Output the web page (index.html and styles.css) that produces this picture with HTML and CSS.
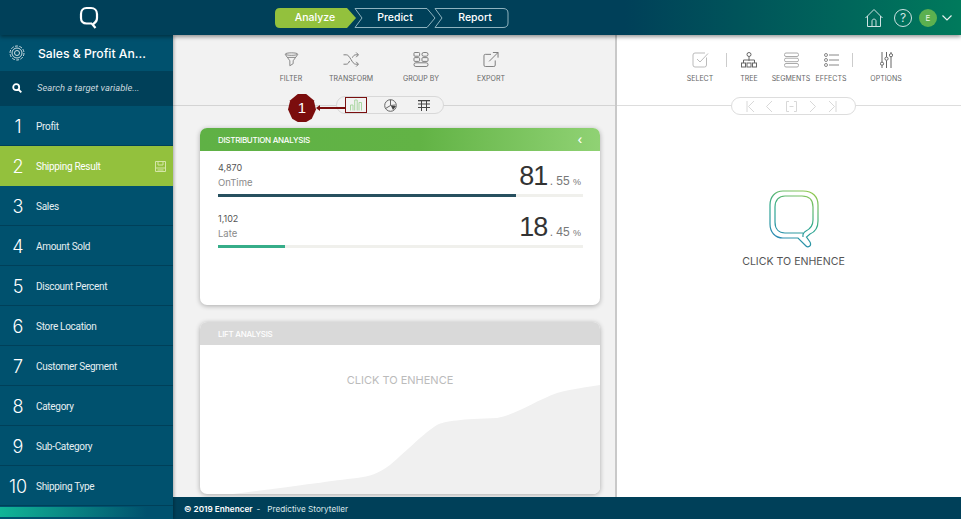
FILE: index.html
```html
<!DOCTYPE html>
<html>

<head>
    <title>Enhencer</title>
    <meta charset="utf-8">
    <link rel="stylesheet" href="styles.css">
</head>

<body>
    <header class="topbar">
        <div class="logo">
            <svg width="20" height="24" viewBox="0 0 20 24" fill="none" stroke="#fff" stroke-width="2.2">
                <path d="M13 17.5H7.5C4 17.5 2 15.2 2 12V8C2 4.500 4.200 2 7.500 2H12C15.500 2 18 4.500 18 8V12C18 14.500 17 16 15.500 17L13.500 18.500L16.500 22"/>
            </svg>
        </div>
        <nav class="steps">
            <svg class="steps-bg" width="236" height="22" viewBox="0 0 236 22" fill="none" stroke="#8fb3bf" stroke-width="1">
                <path d="M80 1.500H152L160 11L152 20.500H80L87 11Z"/>
                <path d="M160 1.500H228Q233 1.500 233 6V16Q233 20.500 228 20.500H160L167 11Z"/>
                <path d="M5 1H72L81 11L72 21H5Q0 21 0 16V6Q0 1 5 1Z" fill="#93c13d" stroke="none"/>
            </svg>
            <span class="step">Analyze</span>
            <span class="step">Predict</span>
            <span class="step">Report</span>
        </nav>
        <div class="top-right">
            <svg class="home" width="18" height="20" viewBox="0 0 18 20" fill="none" stroke="#cfe3e3" stroke-width="1">
                <path d="M.5 10L9 1.500L17.500 10M2.500 8V18.500H15.500V8M7 18.500V13C7 10.500 11 10.500 11 13V18.500"/>
            </svg>
            <span class="help">?</span>
            <span class="avatar">E</span>
            <svg width="10" height="6" viewBox="0 0 10 6" fill="none" stroke="#e6f0ee" stroke-width="1.200">
                <path d="M.5 .5L5 5L9.500 .5"/>
            </svg>
        </div>
    </header>

    <div class="layout">
        <aside class="sidebar">
            <div class="project">
                <svg width="16" height="16" viewBox="0 0 16 16" fill="none" stroke="#cfdfe4" stroke-width="1">
                    <circle cx="8" cy="8" r="2.500"/>
                    <circle cx="8" cy="8" r="5"/>
                    <circle cx="8" cy="8" r="7" stroke-dasharray="3 1.400"/>
                </svg>
                <span>Sales &amp; Profit An...</span>
            </div>
            <div class="search">
                <svg width="10" height="10" viewBox="0 0 10 10" fill="none" stroke="#fff" stroke-width="1.800">
                    <circle cx="4.200" cy="4.200" r="3"/>
                    <path d="M6.500 6.500L9.300 9.300"/>
                </svg>
                <span>Search a target variable...</span>
            </div>
            <ul class="vars">
                <li><b>1</b>Profit</li>
                <li class="active"><b>2</b>Shipping Result
                    <svg class="save" width="11" height="11" viewBox="0 0 11 11" fill="none" stroke="#d5e6a8" stroke-width="1">
                        <path d="M.5 .5H10.500V10.500H.5ZM3 .5V4H8V.5M.5 7H10.500M2.500 9H8.500"/>
                    </svg>
                </li>
                <li><b>3</b>Sales</li>
                <li><b>4</b>Amount Sold</li>
                <li><b>5</b>Discount Percent</li>
                <li><b>6</b>Store Location</li>
                <li><b>7</b>Customer Segment</li>
                <li><b>8</b>Category</li>
                <li><b>9</b>Sub-Category</li>
                <li><b>10</b>Shipping Type</li>
            </ul>
            <div class="side-strip"></div>
        </aside>

        <div class="content">
            <div class="panels">
                <section class="panel-left">
                    <div class="tools">
                        <div class="tool">
                            <svg width="17" height="15" viewBox="0 0 17 18" fill="none" stroke="#777" stroke-width="1">
                                <ellipse cx="8.500" cy="2.500" rx="7.500" ry="1.500"/>
                                <path d="M1 3L6.500 10.500V16.500L10.500 14V10.500L16 3M4 6.500H13"/>
                            </svg>
                            <span>FILTER</span>
                        </div>
                        <div class="tool">
                            <svg width="16" height="15" viewBox="0 0 16 16" fill="none" stroke="#777" stroke-width="1">
                                <path d="M0 3H3C7 3 9 13 13 13H15.500M0 13H3C5 13 5.800 11 6.500 9.500M9.500 6C10.500 4 11.500 3 13 3H15.500M13.500 .5L16 3L13.500 5.500M13.500 10.500L16 13L13.500 15.500"/>
                            </svg>
                            <span>TRANSFORM</span>
                        </div>
                        <div class="tool">
                            <svg width="16" height="15" viewBox="0 0 16 16" fill="none" stroke="#777" stroke-width="1">
                                <rect x=".5" y=".5" width="6" height="4" rx="1"/>
                                <rect x="9" y=".5" width="6.500" height="4" rx="2"/>
                                <rect x=".5" y="6" width="6" height="4" rx="1"/>
                                <rect x="9" y="6" width="6.500" height="4" rx="1"/>
                                <rect x=".5" y="11.500" width="15" height="4" rx="2"/>
                            </svg>
                            <span>GROUP BY</span>
                        </div>
                        <div class="tool">
                            <svg width="16" height="15" viewBox="0 0 16 16" fill="none" stroke="#777" stroke-width="1">
                                <path d="M8 2.500H2Q.5 2.500 .5 4V14Q.5 15.500 2 15.500H11Q12.500 15.500 12.500 14V9M6 10L15.500 .5M10 .5H15.500V6"/>
                            </svg>
                            <span>EXPORT</span>
                        </div>
                    </div>

                    <div class="view-row">
                        <div class="view-switch">
                            <span class="view-btn selected">
                                <svg width="12" height="12" viewBox="0 0 12 12" fill="none" stroke="#a9d6a0" stroke-width="1">
                                    <path d="M.5 11.500V6H3V11.500M4.700 11.500V1H7.200V11.500M9 11.500V3.500H11.500V11.500"/>
                                </svg>
                            </span>
                            <span class="view-btn">
                                <svg width="13" height="13" viewBox="0 0 13 13" fill="none" stroke="#666" stroke-width="1">
                                    <circle cx="6.500" cy="6.500" r="5.800"/>
                                    <path d="M6.500 .7V6.500L1.500 9.500M6.500 6.500L11.500 6"/>
                                    <path d="M7 7L12 7L9 11Z" fill="#444" stroke="none"/>
                                </svg>
                            </span>
                            <span class="view-btn">
                                <svg width="12" height="11" viewBox="0 0 12 11" fill="none" stroke="#444" stroke-width="1">
                                    <path d="M0 .5H12" stroke-width="1.600"/>
                                    <path d="M0 4H12M0 7.500H12M3.500 0V11M8.500 0V11"/>
                                </svg>
                            </span>
                        </div>
                    </div>

                    <div class="callout">
                        <span class="badge">1</span>
                        <span class="callout-arrow"></span>
                    </div>

                    <div class="cards">
                        <article class="card">
                            <h2 class="card-head green">DISTRIBUTION ANALYSIS <i class="chev">‹</i></h2>
                            <div class="stat">
                                <div class="stat-top">
                                    <div class="stat-name">
                                        <div class="count">4,870</div>
                                        <div class="label">OnTime</div>
                                    </div>
                                    <div class="pct"><strong>81</strong> . 55 <small>%</small></div>
                                </div>
                                <div class="track"><div class="fill dark" style="width: 81.55%"></div></div>
                            </div>
                            <div class="stat">
                                <div class="stat-top">
                                    <div class="stat-name">
                                        <div class="count">1,102</div>
                                        <div class="label">Late</div>
                                    </div>
                                    <div class="pct"><strong>18</strong> . 45 <small>%</small></div>
                                </div>
                                <div class="track"><div class="fill teal" style="width: 18.45%"></div></div>
                            </div>
                        </article>

                        <article class="card lift">
                            <h2 class="card-head grey">LIFT ANALYSIS</h2>
                            <div class="lift-text">CLICK TO ENHENCE</div>
                            <svg class="lift-wave" width="400" height="110" viewBox="0 0 400 110" preserveAspectRatio="none">
                                <path d="M33 110C90 103 130 97 157 94C170 92 178 90 190 81C200 73 225 48 237 41C245 37 262 35 297 34C315 31 335 17 357 9C372 5 388 3 400 1V110Z" fill="#f0f0f0"/>
                            </svg>
                        </article>
                    </div>
                </section>

                <section class="panel-right">
                    <div class="tools-right">
                        <div class="tool tool-select">
                            <svg width="17" height="16" viewBox="0 0 17 16" fill="none" stroke="#bbb" stroke-width="1">
                                <path d="M14.500 5.500V13Q14.500 15 12.500 15H3Q1 15 1 13V3Q1 1 3 1H13M5 7L8 10L16 1.500"/>
                            </svg>
                            <span>SELECT</span>
                        </div>
                        <i class="sep sep-first"></i>
                        <div class="tool tool-tree">
                            <svg width="16" height="16" viewBox="0 0 16 16" fill="none" stroke="#666" stroke-width="1">
                                <circle cx="8" cy="2.500" r="2"/>
                                <path d="M8 4.500V9M2.500 11V8H13.500V11"/>
                                <rect x=".5" y="11" width="4" height="4"/>
                                <rect x="6" y="11" width="4" height="4"/>
                                <rect x="11.500" y="11" width="4" height="4"/>
                            </svg>
                            <span>TREE</span>
                        </div>
                        <div class="tool tool-seg">
                            <svg width="15" height="16" viewBox="0 0 15 15" fill="none" stroke="#aaa" stroke-width="1">
                                <rect x=".5" y=".5" width="14" height="3.500" rx="1.500"/>
                                <rect x=".5" y="5.700" width="14" height="3.500" rx="1.500"/>
                                <rect x=".5" y="11" width="14" height="3.500" rx="1.500"/>
                            </svg>
                            <span>SEGMENTS</span>
                        </div>
                        <div class="tool tool-eff">
                            <svg width="15" height="16" viewBox="0 0 15 14" fill="none" stroke="#888" stroke-width="1">
                                <circle cx="2" cy="2" r="1.500"/>
                                <circle cx="2" cy="7" r="1.500"/>
                                <circle cx="2" cy="12" r="1.500"/>
                                <path d="M5 2H15M5 7H15M5 12H15"/>
                            </svg>
                            <span>EFFECTS</span>
                        </div>
                        <i class="sep sep-last"></i>
                        <div class="tool tool-opt">
                            <svg width="13" height="16" viewBox="0 0 13 16" fill="none" stroke="#666" stroke-width="1">
                                <path d="M2 0V10M2 13.500V16M6.500 0V5M6.500 8.500V16M11 0V1.500M11 5V16"/>
                                <circle cx="2" cy="11.700" r="1.600"/>
                                <circle cx="6.500" cy="6.700" r="1.600"/>
                                <circle cx="11" cy="3.200" r="1.600"/>
                            </svg>
                            <span>OPTIONS</span>
                        </div>
                    </div>

                    <div class="pager-row">
                        <div class="pager">
                            <svg width="96" height="11" viewBox="0 0 96 11" fill="none" stroke="#d8d8d8" stroke-width="1">
                                <path d="M1 0V11M8 0L2.500 5.500L8 11M26 0L20.500 5.500L26 11M43 .5H40.500V10.500H43M48 .5H50.500V10.500H48M43.500 5.500H47.500M64 0L69.500 5.500L64 11M83 0L88.500 5.500L83 11M90 0V11"/>
                            </svg>
                        </div>
                    </div>

                    <div class="enhence">
                        <svg width="50" height="58" viewBox="0 0 50 58" fill="none" stroke="url(#qgrad)" stroke-width="1.200">
                            <defs>
                                <linearGradient id="qgrad" gradientUnits="userSpaceOnUse" x1="40" y1="0" x2="10" y2="58">
                                    <stop offset="0" stop-color="#93c94f"/>
                                    <stop offset="0.500" stop-color="#2fa98f"/>
                                    <stop offset="1" stop-color="#2a80bf"/>
                                </linearGradient>
                            </defs>
                            <path d="M14 1H34C44 1 49 7 49 15V31C49 38 46 42 41 44L37.500 47L41 52C43 56 39 58 37 56L29 48H14C6 48 1 42 1 34V15C1 7 6 1 14 1Z"/>
                            <path d="M16 6H33C40 6 44 10 44 17V30C44 36 41 39 37 41C35 42 33.500 44 34 47M34 43H16C10 43 6 39 6 32V17C6 10 10 6 16 6"/>
                        </svg>
                        <div class="enhence-text">CLICK TO ENHENCE</div>
                    </div>
                </section>
            </div>
            <footer class="footer"><b>© 2019 Enhencer</b><span class="dash">-</span><span>Predictive Storyteller</span></footer>
        </div>
    </div>
</body>

</html>
```

FILE: styles.css
```css
* {
    box-sizing: border-box;
}

html,
body {
    height: 100%;
}

body {
    margin: 0;
    overflow: hidden;
    font-family: "Inter", "Liberation Sans", sans-serif;
    color: #555;
}

/* top bar */

.topbar {
    height: 35px;
    display: flex;
    align-items: center;
    position: relative;
    z-index: 3;
    background: linear-gradient(90deg, #004059 0%, #004059 65%, #007a5c 100%);
    box-shadow: 0 2px 4px rgba(0, 0, 0, .4);
}

.logo {
    width: 178px;
    display: flex;
    justify-content: center;
}

.steps {
    position: relative;
    margin-left: 97px;
    width: 236px;
    height: 22px;
    display: flex;
    align-items: center;
}

.steps-bg {
    position: absolute;
    left: 0;
    top: 0;
}

.step {
    position: relative;
    flex: 0 0 80px;
    text-align: center;
    color: #fff;
    font-size: 10.5px;
    font-weight: 500;
}

.top-right {
    margin-left: auto;
    margin-right: 9px;
    display: flex;
    align-items: center;
}

.help {
    width: 18px;
    height: 18px;
    margin-left: 11px;
    border: 1px solid #cfe3e3;
    border-radius: 50%;
    color: #cfe3e3;
    font-size: 12px;
    line-height: 16px;
    text-align: center;
}

.avatar {
    width: 18px;
    height: 18px;
    margin-left: 7px;
    margin-right: 5px;
    border-radius: 50%;
    background: #5cb04f;
    color: #e8f5e4;
    font-size: 8px;
    line-height: 18px;
    text-align: center;
}

/* sidebar */

.layout {
    height: 484px;
    display: flex;
}

.sidebar {
    width: 173px;
    flex-shrink: 0;
    background: #00516e;
    color: #fff;
    position: relative;
    z-index: 2;
    box-shadow: 1px 0 3px rgba(0, 0, 0, .3);
}

.project {
    height: 36px;
    display: flex;
    align-items: center;
    gap: 13px;
    padding-left: 9px;
    font-size: 12.2px;
    font-weight: 500;
}

.search {
    height: 35px;
    display: flex;
    align-items: center;
    gap: 15px;
    padding-left: 12px;
    padding-bottom: 2px;
    background: #004059;
    color: #c9d8de;
    font-family: "Roboto", sans-serif;
    font-size: 9.4px;
    font-style: italic;
}

.vars {
    margin: 0;
    padding: 0;
    list-style: none;
}

.vars li {
    height: 40px;
    padding-top: 1px;
    display: flex;
    align-items: center;
    border-bottom: 1px solid #004059;
    font-family: "Roboto", sans-serif;
    font-size: 10px;
    letter-spacing: -.3px;
    color: #e6eff2;
}

.vars li b {
    width: 36px;
    text-align: center;
    font-family: "Inter", sans-serif;
    font-size: 18px;
    font-weight: 300;
    letter-spacing: 0;
    color: #fff;
}

.vars li.active {
    padding-top: 0;
    background: #93c13d;
    color: #fff;
    border-bottom: 0;
}

.save {
    margin-left: auto;
    margin-right: 7px;
}

.side-strip {
    height: 10px;
    margin-top: 1px;
    background: linear-gradient(90deg, #11b597 0%, #00516e 85%);
}

/* main */

.content {
    flex: 1;
    display: flex;
    flex-direction: column;
    min-width: 0;
}

.panels {
    flex: 1;
    display: flex;
    min-height: 0;
}

.panel-left {
    width: 444px;
    position: relative;
    background: #f2f2f2;
    border-right: 2px solid #c9c9c9;
    overflow: hidden;
}

.tools {
    height: 71px;
    display: flex;
    padding-left: 94px;
    padding-top: 17px;
    border-bottom: 1px solid #d4d4d4;
}

.tool {
    display: flex;
    flex-direction: column;
    align-items: center;
    gap: 7px;
    font-size: 7px;
    color: #666;
    white-space: nowrap;
}

.tools .tool:nth-child(1) {
    width: 48px;
}

.tools .tool:nth-child(2) {
    width: 72px;
}

.tools .tool:nth-child(3) {
    width: 68px;
}

.tools .tool:nth-child(4) {
    width: 72px;
}

.view-row {
    display: flex;
    margin-top: -10px;
    margin-bottom: 14px;
    padding-left: 163px;
}

.view-switch {
    width: 108px;
    height: 18px;
    display: flex;
    align-items: center;
    border: 1px solid #d8d8d8;
    border-radius: 9px;
    background: #f2f2f2;
}

.view-btn {
    width: 34px;
    height: 16px;
    display: flex;
    align-items: center;
    justify-content: center;
}

.view-btn.selected {
    width: 22px;
    margin-left: 8px;
    margin-right: 6px;
    border: 1px solid #7a1010;
}

.callout {
    position: absolute;
    left: 115px;
    top: 59px;
    display: flex;
    align-items: center;
}

.badge {
    width: 28px;
    height: 28px;
    background: #7b0d0d;
    clip-path: polygon(35% 0, 65% 0, 92% 22%, 100% 55%, 85% 88%, 65% 100%, 35% 100%, 15% 88%, 0 55%, 8% 22%);
    color: #fff;
    font-family: "Liberation Sans", sans-serif;
    font-size: 15px;
    line-height: 28px;
    text-align: center;
}

.callout-arrow {
    width: 28px;
    height: 2px;
    margin-left: 2px;
    background: #7b0d0d;
    position: relative;
}

.callout-arrow::before {
    content: "";
    position: absolute;
    left: -2px;
    top: -2px;
    border: 3px solid transparent;
    border-left: 0;
    border-right: 4px solid #7b0d0d;
}

.cards {
    display: flex;
    flex-direction: column;
    gap: 17px;
    padding-left: 27px;
}

.card {
    width: 400px;
    height: 177px;
    background: #fff;
    border-radius: 7px;
    overflow: hidden;
    box-shadow: 0 1px 5px rgba(0, 0, 0, .3);
}

.card-head {
    height: 23px;
    margin: 0;
    padding: 0 18px;
    display: flex;
    align-items: center;
    justify-content: space-between;
    color: #fff;
    font-size: 8px;
    font-weight: 500;
    letter-spacing: -.3px;
}

.card-head.green {
    background: linear-gradient(90deg, #5fb145 0%, #62b345 55%, #90d274 100%);
}

.card-head.grey {
    background: #d9d9d9;
}

.chev {
    font-style: normal;
    font-size: 12px;
}

.stat {
    padding: 10px 17px 0 18px;
}

.stat + .stat {
    padding-top: 15px;
}

.stat-top {
    display: flex;
    justify-content: space-between;
}

.count {
    font-size: 9px;
    color: #555;
    line-height: 14px;
}

.label {
    font-size: 9.5px;
    color: #8a8a8a;
    line-height: 16px;
}

.pct {
    padding-right: 2px;
    font-family: "Liberation Sans", sans-serif;
    font-size: 12px;
    color: #777;
}

.pct strong {
    margin-right: -1px;
    font-size: 27px;
    font-weight: 400;
    letter-spacing: -1px;
    color: #333;
    line-height: 30px;
}

.pct small {
    font-size: 9px;
}

.track {
    height: 3px;
    margin-top: 3px;
    background: #f0f0ec;
}

.fill {
    height: 3px;
}

.fill.dark {
    background: #27505f;
}

.fill.teal {
    background: #36ad89;
}

.card.lift {
    position: relative;
    height: 172px;
}

.lift-text {
    position: relative;
    z-index: 1;
    margin-top: 28px;
    text-align: center;
    font-size: 11px;
    color: #bbb;
}

.lift-wave {
    position: absolute;
    left: 0;
    bottom: 0;
}

/* right panel */

.panel-right {
    flex: 1;
    background: #fff;
    min-width: 0;
}

.tools-right {
    height: 71px;
    display: flex;
    align-items: flex-start;
    padding-top: 17px;
    padding-left: 70px;
    border-bottom: 1px solid #ddd;
}

.tools-right .tool {
    gap: 6px;
}

.tool-select {
    width: 26px;
}

.sep {
    width: 1px;
    height: 14px;
    margin-top: 1px;
    background: #ccc;
}

.sep-first {
    margin-left: 13px;
}

.sep-last {
    margin-left: 1px;
}

.tool-tree {
    width: 44px;
}

.tool-seg {
    width: 40px;
}

.tool-eff {
    width: 40px;
}

.tool-opt {
    width: 66px;
}

.pager-row {
    display: flex;
    justify-content: center;
    margin-top: -9px;
    padding-left: 9px;
}

.pager {
    width: 125px;
    height: 18px;
    display: flex;
    align-items: center;
    justify-content: center;
    background: #fff;
    border: 1px solid #ddd;
    border-radius: 9px;
}

.enhence {
    margin-top: 75px;
    display: flex;
    flex-direction: column;
    align-items: center;
    gap: 7px;
    padding-left: 9px;
}

.enhence-text {
    font-size: 10.6px;
    color: #555;
}

/* footer */

.footer {
    height: 22px;
    display: flex;
    align-items: center;
    padding-left: 11px;
    padding-top: 1px;
    background: #004059;
    color: #dbe7ea;
    font-size: 8.2px;
}

.footer b {
    color: #fff;
    font-weight: 600;
}

.dash {
    margin: 0 7px 0 4px;
}
```
